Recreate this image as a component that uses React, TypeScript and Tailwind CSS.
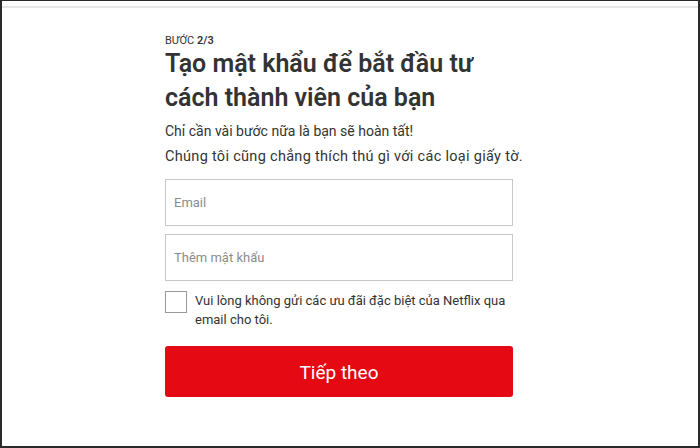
export default function App() {
  return (
    <div className="relative h-[448px] w-[700px] overflow-hidden bg-white font-['Roboto',sans-serif] text-[#333]">
      <div className="h-full w-full border-x-2 border-t border-b-2 border-[#2a2a2a]">
        <div className="mt-[5px] h-[2px] w-full bg-[#e6e6e6]" />
        <div className="ml-[163px] w-[348px] pt-[26px]">
          <div className="text-[11px] leading-[14px] text-[#333]">
            BƯỚC <span className="font-semibold">2/3</span>
          </div>
          <h1 className="mt-[-1px] text-[25px] font-semibold leading-[34px] text-[#333]">
            Tạo mật khẩu để bắt đầu tư cách thành viên của bạn
          </h1>
          <p className="mt-[6px] text-[14px] leading-[20px]">Chỉ cần vài bước nữa là bạn sẽ hoàn tất!</p>
          <p className="mt-[6px] whitespace-nowrap text-[14.5px] leading-[20px] tracking-[0.3px]">
            Chúng tôi cũng chẳng thích thú gì với các loại giấy tờ.
          </p>

          <div className="mt-[12px] flex flex-col gap-[8px]">
            <div className="flex h-[47px] items-center border border-[#c8c8c8] px-[8px] text-[13px] text-[#8c8c8c]">
              Email
            </div>
            <div className="flex h-[47px] items-center border border-[#c8c8c8] px-[8px] text-[13px] text-[#8c8c8c]">
              Thêm mật khẩu
            </div>
          </div>

          <div className="mt-[10px] flex items-start gap-[8px]">
            <div className="h-[22px] w-[22px] shrink-0 border border-[#999]" />
            <div className="text-[13px] leading-[19px] text-[#333]">
              Vui lòng không gửi các ưu đãi đặc biệt của Netflix qua email cho tôi.
            </div>
          </div>

          <button className="mt-[17px] flex h-[51px] w-full items-center justify-center rounded-[3px] bg-[#e50914] pt-[4px] text-[19px] text-white">
            Tiếp theo
          </button>
        </div>
      </div>
    </div>
  )
}
